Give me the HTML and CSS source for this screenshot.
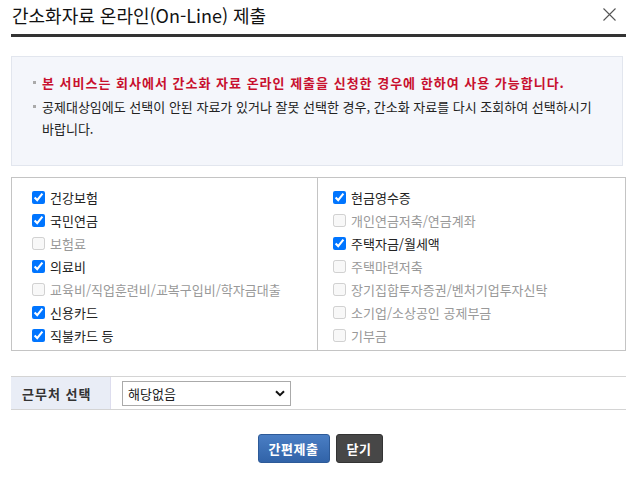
FILE: index.html
```html
<!DOCTYPE html>
<html lang="ko">
<head>
<meta charset="utf-8">
<title>간소화자료 온라인(On-Line) 제출</title>
<link rel="stylesheet" href="styles.css">
</head>
<body>
<div class="dialog">
  <div class="header">
    <h1 class="title">간소화자료 온라인(On-Line) 제출</h1>
    <button class="close" aria-label="닫기">
      <svg width="13" height="13" viewBox="0 0 13 13"><path d="M0.5 0.5 L12.5 12.5 M12.5 0.5 L0.5 12.5" stroke="#555" stroke-width="1.1" fill="none"/></svg>
    </button>
  </div>
  <div class="info">
    <p class="bullet red">본 서비스는 회사에서 간소화 자료 온라인 제출을 신청한 경우에 한하여 사용 가능합니다.</p>
    <p class="bullet">공제대상임에도 선택이 안된 자료가 있거나 잘못 선택한 경우, 간소화 자료를 다시 조회하여 선택하시기 바랍니다.</p>
  </div>
  <div class="checks">
    <ul class="col">
      <li><label><input type="checkbox" checked>건강보험</label></li>
      <li><label><input type="checkbox" checked>국민연금</label></li>
      <li class="off"><label><input type="checkbox" disabled>보험료</label></li>
      <li><label><input type="checkbox" checked>의료비</label></li>
      <li class="off"><label><input type="checkbox" disabled>교육비/직업훈련비/교복구입비/학자금대출</label></li>
      <li><label><input type="checkbox" checked>신용카드</label></li>
      <li><label><input type="checkbox" checked>직불카드 등</label></li>
    </ul>
    <ul class="col right">
      <li><label><input type="checkbox" checked>현금영수증</label></li>
      <li class="off"><label><input type="checkbox" disabled>개인연금저축/연금계좌</label></li>
      <li><label><input type="checkbox" checked>주택자금/월세액</label></li>
      <li class="off"><label><input type="checkbox" disabled>주택마련저축</label></li>
      <li class="off"><label><input type="checkbox" disabled>장기집합투자증권/벤처기업투자신탁</label></li>
      <li class="off"><label><input type="checkbox" disabled>소기업/소상공인 공제부금</label></li>
      <li class="off"><label><input type="checkbox" disabled>기부금</label></li>
    </ul>
  </div>
  <div class="work">
    <div class="work-label">근무처 선택</div>
    <div class="work-field">
      <div class="select">
        <span>해당없음</span>
        <svg width="10" height="7" viewBox="0 0 10 7"><path d="M1 1.2 L5 5.2 L9 1.2" stroke="#111" stroke-width="2" fill="none"/></svg>
      </div>
    </div>
  </div>
  <div class="actions">
    <button class="btn blue">간편제출</button>
    <button class="btn dark">닫기</button>
  </div>
</div>
</body>
</html>
```

FILE: styles.css
```css
* { box-sizing: border-box; }
html, body { margin: 0; padding: 0; background: #fff; }
body {
  font-family: "Noto Sans CJK KR", "Noto Sans", sans-serif;
  font-size: 13px;
  color: #222;
}
.dialog {
  width: 639px;
  padding: 0 13px 0 11px;
}
.header {
  display: flex;
  align-items: center;
  justify-content: space-between;
  height: 37px;
  border-bottom: 3px solid #333;
  padding: 0 0 5px 1px;
}
.title {
  margin: 0;
  font-size: 18px;
  font-weight: 400;
  color: #111;
  line-height: 24px;
}
.close {
  border: 0;
  background: none;
  padding: 0;
  margin: 0 10px 0 0;
  width: 13px;
  height: 13px;
  display: flex;
}
.info {
  margin: 19px 3px 0 0;
  background: #f4f6fb;
  border: 1px solid #e2e6ee;
  height: 110px;
  padding: 15px 20px 0 21px;
}
.info p {
  margin: 0;
  line-height: 22px;
  position: relative;
  padding-left: 9px;
}
.bullet::before {
  content: "";
  position: absolute;
  left: 0;
  top: 9px;
  width: 3px;
  height: 3px;
  background: #aaa;
}
.red {
  color: #c8102e;
  font-weight: 700;
  letter-spacing: 1px;
  margin-bottom: 2px !important;
}
.checks {
  margin-top: 11px;
  border: 1px solid #c4c4c4;
  display: grid;
  grid-template-columns: 305px 1fr;
  height: 174px;
}
.col {
  list-style: none;
  margin: 0;
  padding: 8px 0 0 20px;
}
.col.right {
  border-left: 1px solid #c4c4c4;
  padding-left: 15px;
}
.col li {
  height: 23px;
  display: flex;
  align-items: center;
}
.col label {
  display: flex;
  align-items: center;
  gap: 5px;
}
.col input {
  margin: 0;
  width: 13px;
  height: 13px;
}
.col li.off { color: #999; }
.work {
  margin-top: 25px;
  display: flex;
  height: 34px;
  border-top: 1px solid #d4d4d4;
  border-bottom: 1px solid #d4d4d4;
}
.work-label {
  width: 100px;
  background: #e9edf6;
  font-weight: 700;
  letter-spacing: 1px;
  color: #333;
  display: flex;
  align-items: center;
  padding-left: 11px;
  border-right: 1px solid #dde;
}
.work-field {
  flex: 1;
  display: flex;
  align-items: center;
  padding-left: 11px;
}
.select {
  width: 169px;
  height: 25px;
  border: 1px solid #aaa;
  background: #fff;
  display: flex;
  align-items: center;
  justify-content: space-between;
  padding: 0 5px 0 5px;
  color: #222;
}
.actions {
  display: flex;
  justify-content: center;
  gap: 6px;
  margin-top: 24px;
  padding-left: 3px;
}
.btn {
  font-family: inherit;
  font-size: 13px;
  font-weight: 700;
  letter-spacing: 0.5px;
  color: #fff;
  border-radius: 3px;
  height: 29px;
  padding: 0;
  cursor: pointer;
}
.blue {
  width: 72px;
  background: linear-gradient(#4a7ec4, #3163a8);
  border: 1px solid #2d5a98;
}
.dark {
  width: 47px;
  background: #474747;
  border: 1px solid #333;
}
```
